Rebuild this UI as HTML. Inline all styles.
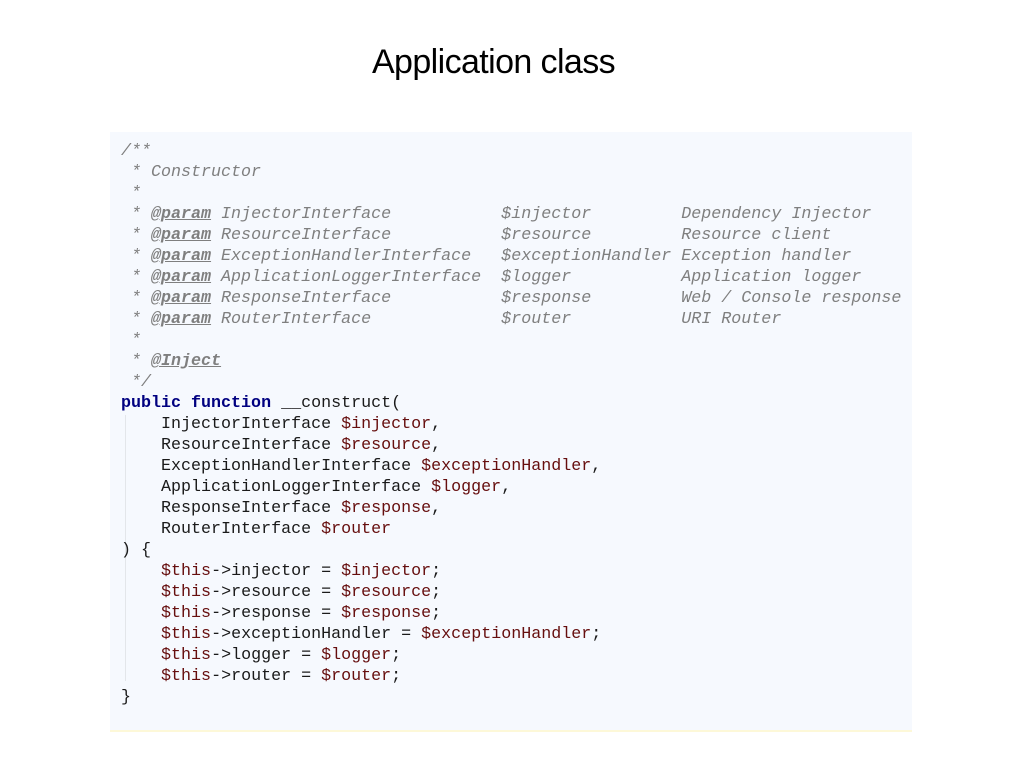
<!DOCTYPE html>
<html><head><meta charset="utf-8"><style>
html,body{margin:0;padding:0;background:#fff;width:1024px;height:768px;overflow:hidden}
h1{position:absolute;left:0;width:987px;top:43px;margin:0;text-align:center;font:34px "Liberation Sans",sans-serif;color:#000;letter-spacing:-0.6px}
.box{position:absolute;left:110px;top:132px;width:802px;height:598px;background:#f6f9fe;border-bottom:2px solid #fdf8d8}
.guide{position:absolute;left:125px;top:415px;width:1px;height:266px;background:#e3e6ea}
pre{position:absolute;left:121px;top:141px;margin:0;font:16.68px/21px "Liberation Mono",monospace;color:#1a1a1a}
.c{color:#7f7f7f;font-style:italic}
.t{color:#7f7f7f;font-weight:bold;text-decoration:underline}
.k{color:#000080;font-weight:bold}
.v{color:#660e0e}
</style></head><body>
<h1>Application class</h1>
<div class="box"></div>
<div class="guide"></div>
<pre><span class="c">/**
 * Constructor
 *
 * <span class="t">@param</span> InjectorInterface           $injector         Dependency Injector
 * <span class="t">@param</span> ResourceInterface           $resource         Resource client
 * <span class="t">@param</span> ExceptionHandlerInterface   $exceptionHandler Exception handler
 * <span class="t">@param</span> ApplicationLoggerInterface  $logger           Application logger
 * <span class="t">@param</span> ResponseInterface           $response         Web / Console response
 * <span class="t">@param</span> RouterInterface             $router           URI Router
 *
 * <span class="t">@Inject</span>
 */</span>
<span class="k">public function</span> __construct(
    InjectorInterface <span class="v">$injector</span>,
    ResourceInterface <span class="v">$resource</span>,
    ExceptionHandlerInterface <span class="v">$exceptionHandler</span>,
    ApplicationLoggerInterface <span class="v">$logger</span>,
    ResponseInterface <span class="v">$response</span>,
    RouterInterface <span class="v">$router</span>
) {
    <span class="v">$this</span>-&gt;injector = <span class="v">$injector</span>;
    <span class="v">$this</span>-&gt;resource = <span class="v">$resource</span>;
    <span class="v">$this</span>-&gt;response = <span class="v">$response</span>;
    <span class="v">$this</span>-&gt;exceptionHandler = <span class="v">$exceptionHandler</span>;
    <span class="v">$this</span>-&gt;logger = <span class="v">$logger</span>;
    <span class="v">$this</span>-&gt;router = <span class="v">$router</span>;
}</pre>
</body></html>
